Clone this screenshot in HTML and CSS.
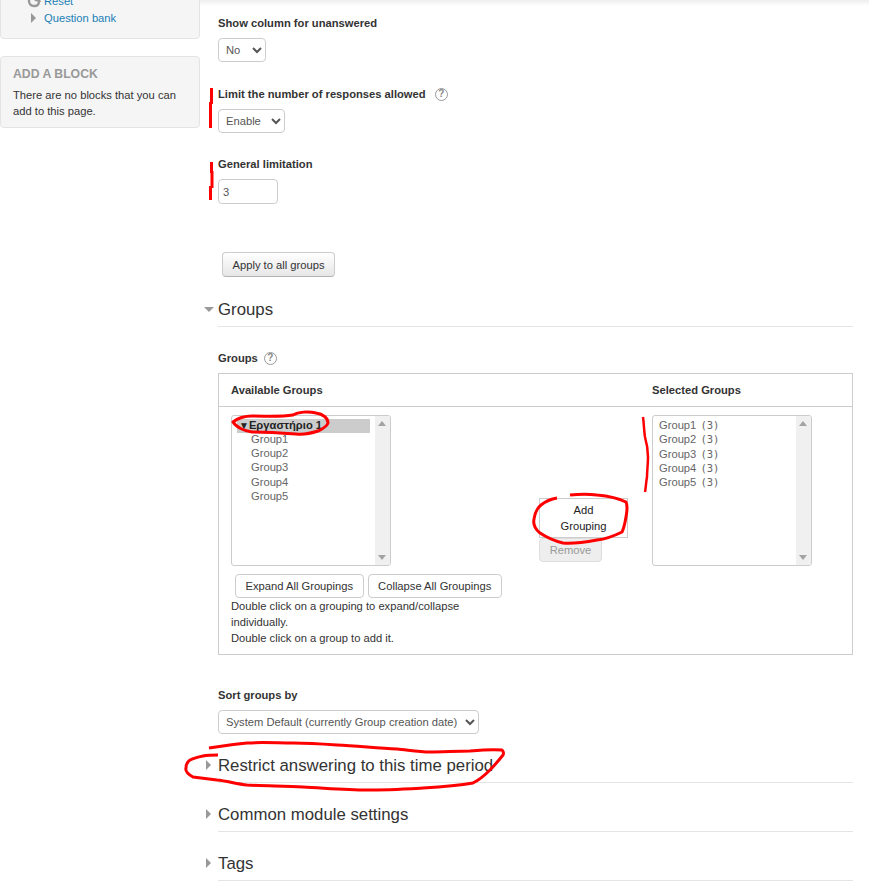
FILE: index.html
```html
<!DOCTYPE html>
<html lang="en">
<head>
<meta charset="utf-8">
<title>Settings</title>
<link rel="stylesheet" href="styles.css">
</head>
<body>
<div class="topshade"></div>
<div class="page">
  <aside class="side">
    <div class="block block-nav">
      <div class="navline reset"><svg class="reseticon" viewBox="0 0 14 14"><path d="M2 2v5c0 3 2 5 5 5h1c3 0 4-2 4-5" fill="none" stroke="#999" stroke-width="2.4"/><path d="M7 7l5-4 2 5z" fill="#999"/></svg><a href="#">Reset</a></div>
      <div class="navline bank"><span class="tri"></span><a href="#">Question bank</a></div>
    </div>
    <div class="block block-add">
      <h2>ADD A BLOCK</h2>
      <p>There are no blocks that you can add to this page.</p>
    </div>
  </aside>
  <main class="main">
    <div class="field f1">
      <label>Show column for unanswered</label>
      <select class="sel sel-no"><option>No</option></select>
    </div>
    <div class="field f2">
      <label>Limit the number of responses allowed <span class="help help-wide">?</span></label>
      <select class="sel sel-enable"><option>Enable</option></select>
    </div>
    <div class="field f3">
      <label>General limitation</label>
      <input class="num" type="text" value="3">
    </div>
    <button class="btn apply">Apply to all groups</button>

    <h3 class="sec open"><span class="tri-down"></span>Groups</h3>

    <div class="field f4">
      <label>Groups <span class="help">?</span></label>
      <div class="groups">
        <div class="ghead">
          <span class="availhead">Available Groups</span>
          <span class="selhead">Selected Groups</span>
        </div>
        <div class="gbody">
          <div class="gleft">
            <div class="list">
              <div class="items">
                <div class="grouping"><span class="caret">▼</span>Εργαστήριο 1</div>
                <div class="it">Group1</div>
                <div class="it">Group2</div>
                <div class="it">Group3</div>
                <div class="it">Group4</div>
                <div class="it">Group5</div>
              </div>
              <div class="sbar"><i class="up"></i><i class="dn"></i></div>
            </div>
            <div class="exp">
              <button class="btn plain">Expand All Groupings</button>
              <button class="btn plain">Collapse All Groupings</button>
            </div>
            <p class="note">Double click on a grouping to expand/collapse individually.<br>Double click on a group to add it.</p>
          </div>
          <div class="gmid">
            <button class="btn add">Add Grouping</button>
            <button class="btn remove" disabled>Remove</button>
          </div>
          <div class="list list-r">
            <div class="items sel-items">
              <div>Group1 <span class="cnt">(3)</span></div>
              <div>Group2 <span class="cnt">(3)</span></div>
              <div>Group3 <span class="cnt">(3)</span></div>
              <div>Group4 <span class="cnt">(3)</span></div>
              <div>Group5 <span class="cnt">(3)</span></div>
            </div>
            <div class="sbar"><i class="up"></i><i class="dn"></i></div>
          </div>
        </div>
      </div>
    </div>

    <div class="field f5">
      <label>Sort groups by</label>
      <select class="sel sel-sort"><option>System Default (currently Group creation date)</option></select>
    </div>

    <h3 class="sec s1"><span class="tri-right"></span>Restrict answering to this time period</h3>
    <h3 class="sec s2"><span class="tri-right"></span>Common module settings</h3>
    <h3 class="sec s2"><span class="tri-right"></span>Tags</h3>
  </main>
</div>
<svg class="ink" viewBox="0 0 869 896" width="869" height="896" fill="none" stroke="#f00" stroke-linecap="butt" stroke-linejoin="round">
  <path stroke-width="3" d="M211.5 88v16M210.5 102v26"/>
  <path stroke-width="3" d="M211.5 162v11M212 171v17M210.5 186v14"/>
  <path stroke-width="3" d="M233 422C238 418 244 416 252 416C268 416 280 417 293 415C298 412 308 411 316 413C323 414 328 418 328 423C327 427 322 429 318 431C312 433 306 435 296 434C282 433 268 432 252 432C244 431 236 427 233 422Z"/>
  <path stroke-width="2.5" d="M643 417C644 424 644 431 645 437C647 444 648 451 648 457C648 464 647 471 647 477C646 482 646 487 645 492"/>
  <path stroke-width="3" d="M570 495C580 494 589 494 597 495C608 496 618 498 626 502C628 507 627 512 626 517C625 523 624 528 622 532C614 536 606 539 597 540C586 542 574 544 563 543C555 541 546 537 540 533C535 529 533 524 534 519C535 513 537 508 541 505C546 501 551 499 557 498"/>
  <path stroke-width="3" d="M209 748C222 746 235 744 247 743C262 742 278 743 293 743C308 743 323 744 337 745C357 746 377 748 397 749C408 750 419 752 430 752C443 752 456 751 470 751C481 750 492 749 502 750C504 752 504 753 503 755C499 760 495 765 490 770C485 775 479 780 473 783C456 786 440 787 423 788C404 789 386 790 367 790C346 790 324 788 303 787C284 786 265 786 247 785C237 784 227 781 217 780C209 779 201 778 193 777C188 774 185 771 186 768C186 765 187 762 190 760C194 758 198 757 203 756C208 755 213 755 218 755"/>
</svg>
</body>
</html>
```
FILE: styles.css
```css
* { box-sizing: border-box; }
html, body { margin: 0; padding: 0; }
body {
  position: relative;
  height: 896px;
  overflow: hidden;
  background: #fff;
  color: #333;
  font-family: "Liberation Sans", Arial, sans-serif;
  font-size: 11.2px;
  line-height: 16px;
}
a { color: #1a7fb5; text-decoration: none; }
.topshade {
  position: absolute; left: 200px; right: 0; top: 0; height: 6px;
  background: linear-gradient(#eee, #fff);
}
.page { display: flex; align-items: flex-start; }
.side { width: 200px; flex: none; margin-top: -16px; }
.block {
  background: #f5f5f5;
  border: 1px solid #e3e3e3;
  border-radius: 4px;
}
.block-nav { height: 55px; padding: 8px 0 0 26px; margin-bottom: 17px; }
.navline { display: flex; align-items: center; height: 16px; }
.navline.bank { margin: 1px 0 0 4px; }
.reseticon { width: 14px; height: 14px; margin-right: 3px; }
.tri {
  width: 0; height: 0; margin-right: 8px;
  border-left: 5px solid #999;
  border-top: 5px solid transparent;
  border-bottom: 5px solid transparent;
}
.block-add { height: 72px; padding: 9px 12px; }
.block-add h2 {
  margin: 0 0 5px; font-size: 12.25px; line-height: 16px; font-weight: bold; color: #999;
}
.block-add p { margin: 0; }
.main { flex: 1; min-width: 0; padding: 15px 16px 0 18px; }
.field label { display: block; font-weight: bold; height: 16px; margin-bottom: 7px; }
.sel {
  display: block;
  height: 24px;
  padding: 0 3px;
  background: #fff;
  border: 1px solid #ccc;
  border-radius: 4px;
  color: #555;
  font: 11.2px "Liberation Sans", Arial, sans-serif;
}
.sel-no { width: 48px; }
.sel-enable { width: 67px; }
.sel-sort { width: 261px; }
.f2 { margin-top: 24px; }
.f3 { margin-top: 23px; }
.num {
  display: block; width: 60px; height: 25px; padding: 0 4px;
  border: 1px solid #ccc; border-radius: 4px; color: #555;
  font: 11.2px "Liberation Sans", Arial, sans-serif;
}
.help {
  display: inline-block; width: 13px; height: 13px; margin-left: 3px;
  border: 1.5px solid #999; border-radius: 50%;
  color: #888; font-size: 10px; font-weight: bold; line-height: 10px; text-align: center; vertical-align: 1px;
}
.help-wide { margin-left: 6px; }
.btn {
  font: 11.2px/16px "Liberation Sans", Arial, sans-serif;
  color: #333;
  background: linear-gradient(#fff, #e6e6e6);
  border: 1px solid #ccc;
  border-bottom-color: #b3b3b3;
  border-radius: 4px;
  padding: 0 9.5px;
}
.apply { display: block; height: 25px; margin: 48px 0 0 4px; }
.sec {
  position: relative;
  margin: 0;
  height: 30px;
  border-bottom: 1px solid #e5e5e5;
  font-size: 16.8px;
  line-height: 26px;
  font-weight: normal;
  color: #333;
}
.sec.open { margin-top: 20px; }
.tri-down {
  position: absolute; left: -14px; top: 10px; width: 0; height: 0;
  border-top: 5px solid #999;
  border-left: 5px solid transparent;
  border-right: 5px solid transparent;
}
.tri-right {
  position: absolute; left: -12px; top: 7px; width: 0; height: 0;
  border-left: 5px solid #999;
  border-top: 5px solid transparent;
  border-bottom: 5px solid transparent;
}
.f4 { margin-top: 23px; }
.groups { height: 282px; border: 1px solid #ccc; }
.ghead {
  display: flex; height: 33px; padding: 8px 12px;
  border-bottom: 1px solid #ccc; font-weight: bold;
}
.availhead { width: 421px; flex: none; }
.gbody { display: flex; padding: 8px 12px 0; }
.gleft { width: 280px; flex: none; }
.list {
  display: flex; width: 160px; height: 151px;
  border: 1px solid #ccc; border-radius: 3px; background: #fff;
  overflow: hidden;
}
.items { flex: 1; min-width: 0; padding: 3px 5px 0; color: #666; line-height: 14.2px; }
.grouping { background: #ccc; color: #222; font-weight: bold; height: 14px; line-height: 13px; margin-bottom: -1px; white-space: nowrap; padding-left: 2px; }
.caret { font-size: 10px; font-weight: normal; }
.it { padding-left: 14px; }
.sbar { position: relative; width: 15px; flex: none; background: #f0f0f0; }
.up, .dn { position: absolute; left: 3px; width: 0; height: 0; border-left: 4px solid transparent; border-right: 4px solid transparent; }
.up { top: 5px; border-bottom: 5px solid #a3a3a3; }
.dn { bottom: 5px; border-top: 5px solid #a3a3a3; }
.exp { display: flex; gap: 4px; margin: 8px 0 0 4px; }
.plain { height: 24px; background: #fff; border-color: #ccc; white-space: nowrap; }
.note { margin: 0; }
.gmid { width: 141px; flex: none; padding: 83px 0 0 28px; }
.add {
  display: block; width: 89px; height: 40px; padding: 0 20px; background: #fff; color: #222;
  border-color: #ccc; border-radius: 0;
}
.remove {
  display: block; width: 63px; height: 24px; padding: 0; background: #eee; color: #999;
  border-color: #ddd;
}
.sel-items { padding: 2px 6px; line-height: 14.3px; }
.cnt { font-family: "DejaVu Sans Mono", monospace; font-size: 10.5px; margin-left: 1px; }
.f5 { margin-top: 32px; }
.s1 { margin-top: 19px; }
.s2 { margin-top: 19px; }
.ink { position: absolute; left: 0; top: 0; pointer-events: none; }
```
